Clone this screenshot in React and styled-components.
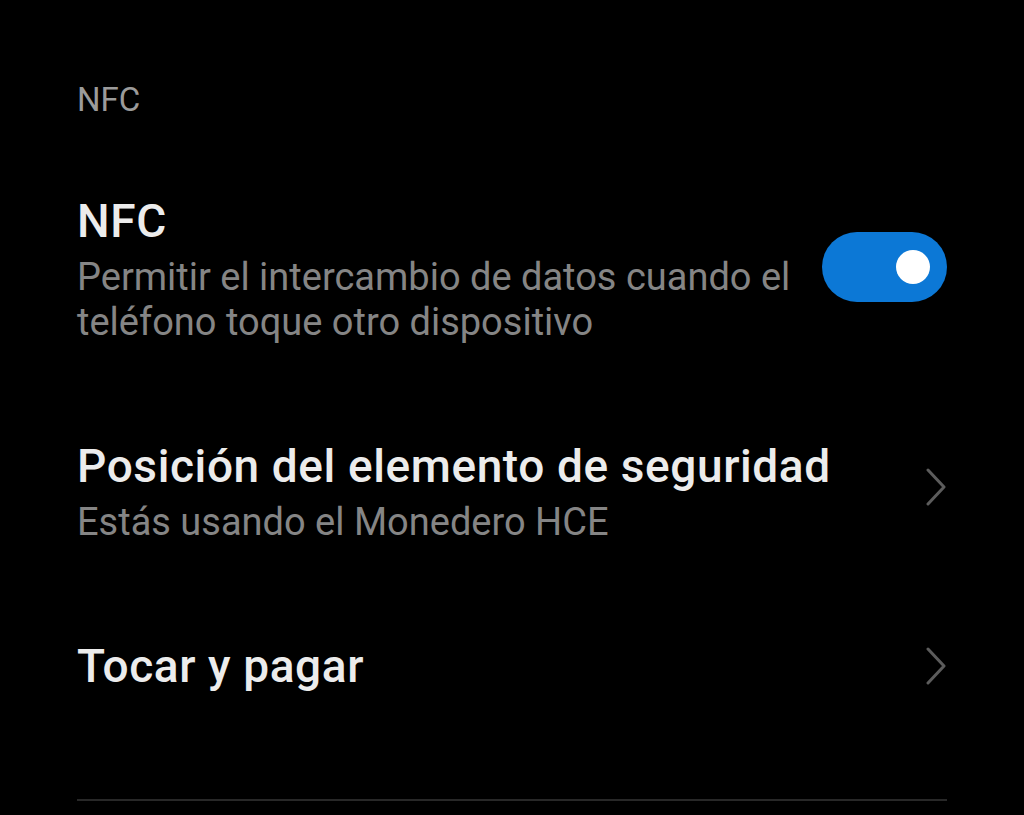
import styled, { createGlobalStyle } from "styled-components";

const GlobalStyle = createGlobalStyle`
    html, body {
        margin: 0;
        padding: 0;
        background: #000;
    }
    body {
        font-family: Roboto, "Noto Sans", "Liberation Sans", sans-serif;
        -webkit-font-smoothing: antialiased;
    }
`

const Page = styled.div`
    width: 1024px;
    height: 815px;
    box-sizing: border-box;
    padding: 80px 77px 0;
    background: #000;
    overflow: hidden;
`

const SectionLabel = styled.div`
    font-size: 33px;
    line-height: 40px;
    color: #9b9b9b;
    margin-bottom: 27px;
`

const Row = styled.div`
    display: flex;
    align-items: center;
    justify-content: space-between;
    gap: 28px;
    padding: 47px 0;
`

const Texts = styled.div`
    display: flex;
    flex-direction: column;
    min-width: 0;
`

const Title = styled.div`
    font-size: 46px;
    line-height: 54px;
    font-weight: 500;
    letter-spacing: 0.6px;
    color: #ececec;
`

const Summary = styled.div`
    font-size: 38px;
    line-height: 45px;
    color: #858585;
    margin-top: 7px;
`

const Toggle = styled.div`
    flex: none;
    width: 125px;
    height: 70px;
    border-radius: 35px;
    background: ${p => (p.$on ? "#0c78d6" : "#3a3a3a")};
    display: flex;
    align-items: center;
    justify-content: ${p => (p.$on ? "flex-end" : "flex-start")};
    padding: 0 17px;
    box-sizing: border-box;
    margin-bottom: 6px;
`

const Knob = styled.span`
    width: 34px;
    height: 34px;
    border-radius: 50%;
    background: #fff;
`

const Chevron = styled.svg`
    flex: none;
    width: 22px;
    height: 38px;
    margin-bottom: ${p => p.$lift || 0}px;
`

const Divider = styled.div`
    height: 2px;
    background: #282828;
    margin-top: 59px;
`

const Arrow = ({ lift }) => (
    <Chevron $lift={lift} viewBox="0 0 22 38">
        <polyline points="3,2 19,19 3,36" fill="none" stroke="#5c5c5c" strokeWidth="3" strokeLinecap="round" strokeLinejoin="round" />
    </Chevron>
)

const App = () => {
    return (
        <>
            <GlobalStyle />
            <Page>
                <SectionLabel>NFC</SectionLabel>
                <Row>
                    <Texts>
                        <Title>NFC</Title>
                        <Summary>
                            Permitir el intercambio de datos cuando el<br />
                            teléfono toque otro dispositivo
                        </Summary>
                    </Texts>
                    <Toggle $on>
                        <Knob />
                    </Toggle>
                </Row>
                <Row>
                    <Texts>
                        <Title>Posición del elemento de seguridad</Title>
                        <Summary>Estás usando el Monedero HCE</Summary>
                    </Texts>
                    <Arrow lift={10} />
                </Row>
                <Row>
                    <Texts>
                        <Title>Tocar y pagar</Title>
                    </Texts>
                    <Arrow lift={0} />
                </Row>
                <Divider />
            </Page>
        </>
    );
}

export default App;
